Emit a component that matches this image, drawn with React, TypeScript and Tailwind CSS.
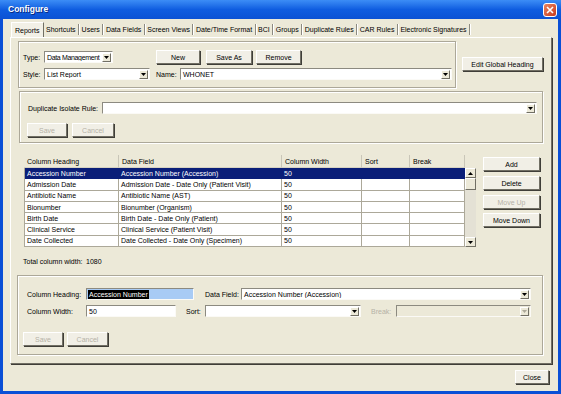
import React from 'react';

const raised =
  'border border-t-white border-l-white border-b-[#716F64] border-r-[#716F64] shadow-[1px_1px_0_#3f3e38]';
const sunken = 'border border-t-[#8C8A80] border-l-[#8C8A80] border-b-[#FBFAF6] border-r-[#FBFAF6]';
const etched = 'border border-[#ACA899] shadow-[inset_1px_1px_0_#ffffff,1px_1px_0_#ffffff]';
const bevel = 'border border-t-white border-l-white border-b-[#716F64] border-r-[#716F64]';

function Btn({ children, className = '', disabled = false }: { children: React.ReactNode; className?: string; disabled?: boolean }) {
  return (
    <div
      className={`flex items-center justify-center bg-[#F1EFE6] ${raised} ${
        disabled ? 'text-[#B5B2A6]' : 'text-black'
      } ${className}`}
    >
      {children}
    </div>
  );
}

function Arrow({ disabled = false }: { disabled?: boolean }) {
  return (
    <div className={`w-[9px] h-[9px] mr-[1px] flex items-center justify-center bg-[#ECE9D8] ${bevel}`}>
      <svg width="5" height="3" viewBox="0 0 5 3">
        <path d="M0 0h5L2.5 3z" fill={disabled ? '#ACA899' : '#000'} />
      </svg>
    </div>
  );
}

function Combo({
  value = '',
  className = '',
  textClass = '',
  disabled = false,
}: {
  value?: string;
  className?: string;
  textClass?: string;
  disabled?: boolean;
}) {
  return (
    <div className={`flex items-center ${disabled ? 'bg-[#ECE9D8]' : 'bg-white'} ${sunken} ${className}`}>
      <span className={`flex-1 pl-[2px] overflow-hidden ${textClass}`}>{value}</span>
      <Arrow disabled={disabled} />
    </div>
  );
}

const columns = [
  { name: 'Column Heading', w: 'w-[95px]' },
  { name: 'Data Field', w: 'w-[163px]' },
  { name: 'Column Width', w: 'w-[80px]' },
  { name: 'Sort', w: 'w-[48px]' },
  { name: 'Break', w: 'w-[55px]' },
];

const rows = [
  ['Accession Number', 'Accession Number (Accession)'],
  ['Admission Date', 'Admission Date - Date Only (Patient Visit)'],
  ['Antibiotic Name', 'Antibiotic Name (AST)'],
  ['Bionumber', 'Bionumber (Organism)'],
  ['Birth Date', 'Birth Date - Date Only (Patient)'],
  ['Clinical Service', 'Clinical Service (Patient Visit)'],
  ['Date Collected', 'Date Collected - Date Only (Specimen)'],
];

const tabs = [
  'Reports',
  'Shortcuts',
  'Users',
  'Data Fields',
  'Screen Views',
  'Date/Time Format',
  'BCI',
  'Groups',
  'Duplicate Rules',
  'CAR Rules',
  'Electronic Signatures',
];

export default function App() {
  return (
    <div className="w-[561px] h-[394px] flex flex-col bg-[#0A4FD6] font-['Liberation_Sans',Arial,sans-serif] text-[7px] leading-none text-black whitespace-nowrap overflow-hidden">
      {/* title bar */}
      <div className="h-[19px] flex items-center justify-between pl-[8px] pr-[4px] bg-gradient-to-b from-[#3C8DF6] via-[#0F5DE0] to-[#0B52D4]">
        <span className="text-white font-bold text-[8.5px] [text-shadow:1px_1px_0_#0a2a80]">Configure</span>
        <div className="w-[14px] h-[14px] rounded-[3px] border border-white bg-gradient-to-br from-[#E9835F] to-[#C8381A] flex items-center justify-center">
          <svg width="8" height="8" viewBox="0 0 8 8">
            <path d="M1 1L7 7M7 1L1 7" stroke="#fff" strokeWidth="1.6" />
          </svg>
        </div>
      </div>

      {/* body */}
      <div className="flex-1 mx-[3px] mb-[3px] bg-[#ECE9D8] flex flex-col">
        {/* tabs */}
        <div className="h-[15px] mt-[3px] ml-[8px] flex items-stretch">
          {tabs.map((t, i) =>
            i === 0 ? (
              <div key={t} className="px-[3px] flex items-center bg-[#F2F0E6] border border-b-0 border-t-white border-l-white border-r-[#716F64]">
                {t}
              </div>
            ) : (
              <div key={t} className="px-[2.5px] flex items-center border-r border-r-[#8C8A80] shadow-[1px_0_0_#ffffff] my-[2px]">
                {t}
              </div>
            )
          )}
        </div>

        {/* tab panel */}
        <div className="h-[327px] ml-[7px] mr-[6px] border border-t-white border-l-white border-b-[#716F64] border-r-[#716F64] shadow-[1px_1px_0_#3f3e38] flex flex-col">
          {/* row 1 */}
          <div className="flex mt-[3px] ml-[7px]">
            <div className={`w-[438px] h-[47px] ${etched} pl-[4px] pt-[8px] flex flex-col gap-[4px]`}>
              <div className="flex items-center h-[14px]">
                <span className="w-[21px]">Type:</span>
                <Combo value="Data Management" textClass="tracking-[-0.35px]" className="w-[69px] h-[12px]" />
                <Btn className="w-[44px] h-[14px] ml-[43px]">New</Btn>
                <Btn className="w-[46px] h-[14px] ml-[6px]">Save As</Btn>
                <Btn className="w-[45px] h-[14px] ml-[4px]">Remove</Btn>
              </div>
              <div className="flex items-center h-[12px]">
                <span className="w-[21px]">Style:</span>
                <Combo value="List Report" className="w-[106px] h-[12px]" />
                <span className="ml-[6px] w-[24px]">Name:</span>
                <Combo value="WHONET" className="w-[272px] h-[12px]" />
              </div>
            </div>
            <Btn className="w-[81px] h-[14px] ml-[6px] mt-[16px]">Edit Global Heading</Btn>
          </div>

          {/* duplicate rule group */}
          <div className={`ml-[8px] mt-[3px] w-[524px] h-[52px] ${etched} pt-[10px] pl-[8px] flex flex-col`}>
            <div className="flex items-center h-[12px]">
              <span className="w-[74px]">Duplicate Isolate Rule:</span>
              <Combo className="w-[435px] h-[12px]" />
            </div>
            <div className="flex mt-[9px] gap-[5px] -ml-[1px]">
              <Btn disabled className="w-[40px] h-[14px]">Save</Btn>
              <Btn disabled className="w-[42px] h-[14px]">Cancel</Btn>
            </div>
          </div>

          {/* table + buttons */}
          <div className="flex ml-[13px] mt-[12px]">
            <div className="flex flex-col w-[452px]">
              <div className="flex h-[13px]">
                {columns.map((c) => (
                  <div key={c.name} className={`${c.w} flex items-center pl-[3px] border-r border-r-[#C9C6B8] border-b border-b-[#D6D2C2] bg-[#ECE9D8]`}>
                    {c.name}
                  </div>
                ))}
              </div>
              <div className="flex">
                <div className="flex flex-col bg-white border-l border-l-[#ACA899]">
                  {rows.map((r, i) => {
                    const sel = i === 0;
                    const cell = sel ? '' : 'border-r border-b border-[#ACA899]';
                    return (
                      <div key={r[0]} className={`flex h-[11.3px] ${sel ? 'bg-[#0A1E78] text-white' : ''}`}>
                        <div className={`w-[94px] flex items-center pl-[2px] ${cell}`}>{r[0]}</div>
                        <div className={`w-[163px] flex items-center pl-[2px] ${cell}`}>{r[1]}</div>
                        <div className={`w-[80px] flex items-center pl-[2px] ${cell}`}>50</div>
                        <div className={`w-[48px] ${cell}`} />
                        <div className={`w-[55px] ${cell}`} />
                      </div>
                    );
                  })}
                </div>
                {/* scrollbar */}
                <div className="w-[11px] flex flex-col bg-[#E4E1D5]">
                  <div className={`h-[10px] flex items-center justify-center bg-[#ECE9D8] ${bevel}`}>
                    <svg width="5" height="3" viewBox="0 0 5 3">
                      <path d="M0 3h5L2.5 0z" fill="#000" />
                    </svg>
                  </div>
                  <div className={`h-[12px] bg-[#ECE9D8] ${bevel}`} />
                  <div className="flex-1" />
                  <div className={`h-[10px] flex items-center justify-center bg-[#ECE9D8] ${bevel}`}>
                    <svg width="5" height="3" viewBox="0 0 5 3">
                      <path d="M0 0h5L2.5 3z" fill="#000" />
                    </svg>
                  </div>
                </div>
              </div>
            </div>
            <div className="flex flex-col ml-[7px] mt-[2px]">
              <Btn className="w-[57px] h-[14px]">Add</Btn>
              <Btn className="w-[57px] h-[14px] mt-[5px]">Delete</Btn>
              <Btn disabled className="w-[57px] h-[14px] mt-[5px]">Move Up</Btn>
              <Btn className="w-[57px] h-[14px] mt-[4px]">Move Down</Btn>
            </div>
          </div>

          <div className="flex ml-[12px] mt-[10px] h-[9px] items-center">
            <span className="w-[63px]">Total column width:</span>
            <span>1080</span>
          </div>

          {/* column detail group */}
          <div className={`ml-[6px] mt-[9px] w-[526px] h-[80px] ${etched} pt-[12px] flex flex-col`}>
            <div className="flex items-center h-[12px] pl-[9px]">
              <span className="w-[59px]">Column Heading:</span>
              <div className={`w-[108px] h-[12px] bg-[#A8CBF5] ${sunken} flex items-center pl-[1px]`}>
                <span className="bg-black text-white px-[1px] h-[9px] flex items-center">Accession Number</span>
              </div>
              <span className="ml-[11px] w-[36px]">Data Field:</span>
              <Combo value="Accession Number (Accession)" className="w-[290px] h-[12px]" />
            </div>
            <div className="flex items-center h-[12px] pl-[9px] mt-[5px]">
              <span className="w-[59px]">Column Width:</span>
              <div className={`w-[90px] h-[12px] bg-white ${sunken} flex items-center pl-[2px]`}>50</div>
              <span className="ml-[10px] w-[19px]">Sort:</span>
              <Combo className="w-[156px] h-[12px]" />
              <span className="ml-[10px] w-[25px] text-[#B5B2A6]">Break:</span>
              <Combo disabled className="w-[135px] h-[12px]" />
            </div>
            <div className="flex mt-[15px] ml-[5px] gap-[4px]">
              <Btn disabled className="w-[40px] h-[14px]">Save</Btn>
              <Btn disabled className="w-[41px] h-[14px]">Cancel</Btn>
            </div>
          </div>
        </div>

        {/* footer */}
        <div className="flex justify-end mt-[6px] mr-[9px]">
          <Btn className="w-[34px] h-[14px]">Close</Btn>
        </div>
      </div>
    </div>
  );
}
